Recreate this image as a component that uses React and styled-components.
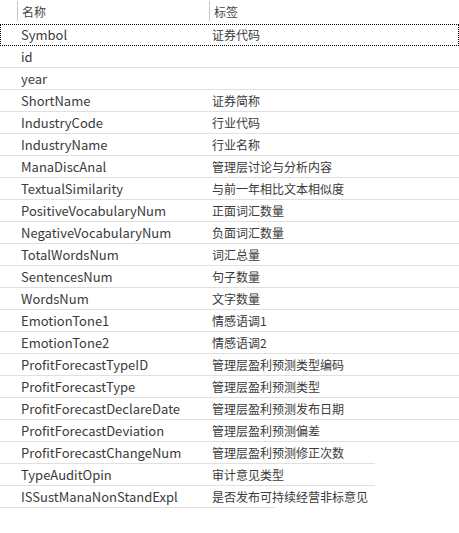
import React from "react";
import styled, { createGlobalStyle } from "styled-components";

const fields = [
  ["Symbol", "证券代码"],
  ["id", ""],
  ["year", ""],
  ["ShortName", "证券简称"],
  ["IndustryCode", "行业代码"],
  ["IndustryName", "行业名称"],
  ["ManaDiscAnal", "管理层讨论与分析内容"],
  ["TextualSimilarity", "与前一年相比文本相似度"],
  ["PositiveVocabularyNum", "正面词汇数量"],
  ["NegativeVocabularyNum", "负面词汇数量"],
  ["TotalWordsNum", "词汇总量"],
  ["SentencesNum", "句子数量"],
  ["WordsNum", "文字数量"],
  ["EmotionTone1", "情感语调1"],
  ["EmotionTone2", "情感语调2"],
  ["ProfitForecastTypeID", "管理层盈利预测类型编码"],
  ["ProfitForecastType", "管理层盈利预测类型"],
  ["ProfitForecastDeclareDate", "管理层盈利预测发布日期"],
  ["ProfitForecastDeviation", "管理层盈利预测偏差"],
  ["ProfitForecastChangeNum", "管理层盈利预测修正次数"],
  ["TypeAuditOpin", "审计意见类型"],
  ["ISSustManaNonStandExpl", "是否发布可持续经营非标意见"],
];

// the screenshot is cropped unevenly at the bottom
const lineWidths = { 19: "375px", 20: "375px", 21: "275px" };

const App = () => {
  return (
    <>
      <GlobalStyle />
      <Table>
        <Header>
          <HeadCell>名称</HeadCell>
          <HeadCell>标签</HeadCell>
        </Header>
        {fields.map(([name, label], i) => (
          <Row key={name} $selected={i === 0} $line={lineWidths[i] || "100%"}>
            <NameCell>{name}</NameCell>
            <LabelCell>{label}</LabelCell>
          </Row>
        ))}
      </Table>
    </>
  );
};

export default App;

const GlobalStyle = createGlobalStyle`
  body {
    margin: 0;
    background: #ffffff;
    font-family: "Noto Sans CJK SC", "Noto Sans", sans-serif;
  }
`;

const Table = styled.div`
  width: 459px;
  display: flex;
  flex-direction: column;
  color: #3a3a3a;
`;

const Header = styled.div`
  display: grid;
  grid-template-columns: 192px 1fr;
  height: 24px;
  padding-left: 17px;
`;

const HeadCell = styled.div`
  display: flex;
  align-items: center;
  padding-left: 4px;
  border-left: 1px solid #c8c8c8;
  height: 20px;
  margin-top: 1px;
  font-size: 12px;
  color: #444444;
`;

const Row = styled.div`
  position: relative;
  display: grid;
  grid-template-columns: 212px 1fr;
  height: 22px;
  box-sizing: border-box;
  padding-bottom: 2px;
  align-items: center;
  outline: ${(p) => (p.$selected ? "1px dotted #000" : "none")};
  outline-offset: -1px;

  &::after {
    content: "";
    position: absolute;
    left: 0;
    bottom: 0;
    width: ${(p) => p.$line};
    height: 1px;
    background: ${(p) => (p.$selected ? "transparent" : "#e0e0e0")};
  }
`;

const NameCell = styled.div`
  padding-left: 21px;
  white-space: nowrap;
  font-size: 13px;
`;

const LabelCell = styled.div`
  white-space: nowrap;
  font-size: 12px;
`;
